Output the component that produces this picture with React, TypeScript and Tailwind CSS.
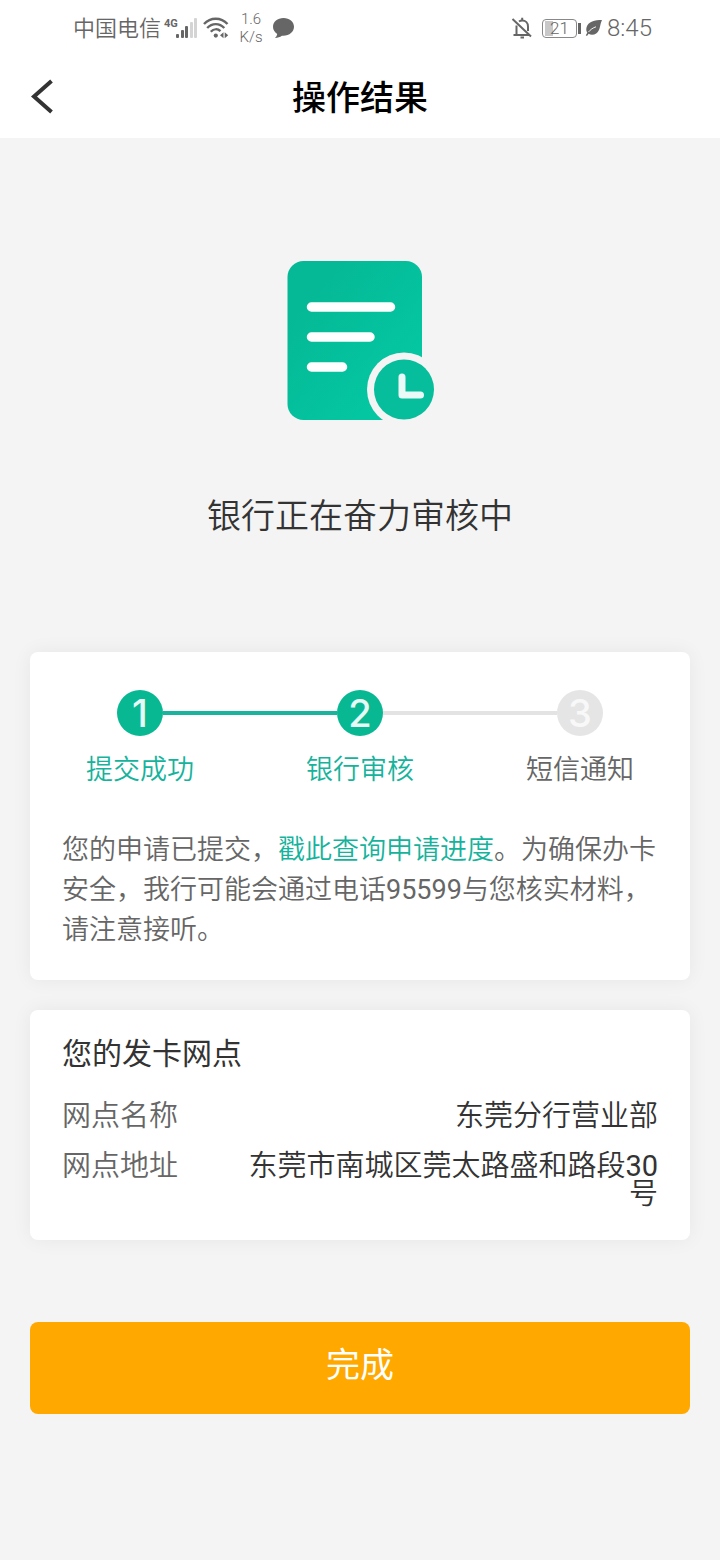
import clsx from "clsx";

const steps = [
  { id: 1, label: "提交成功", done: true },
  { id: 2, label: "银行审核", done: true },
  { id: 3, label: "短信通知", done: false },
];

function StatusBar() {
  return (
    <div className="flex h-14 items-center justify-between pr-[68px] pl-[73px] text-[#666]">
      <div className="flex items-center">
        <span className="text-[22px] font-[350]">中国电信</span>
        {/* Signal */}
        <svg className="ml-0.5 h-6 w-9" viewBox="0 0 36 24" fill="#666">
          <text x="1" y="11" fontSize="11" fontWeight="700" textAnchor="start">
            4G
          </text>
          <rect x="13" y="18" width="3" height="4" rx="1" />
          <rect x="18" y="14" width="3" height="8" rx="1" />
          <rect x="22" y="10" width="3" height="12" rx="1" />
          <rect x="27" y="6" width="3" height="16" rx="1" fill="#d4d4d4" />
          <rect x="31" y="2" width="3" height="20" rx="1" fill="#d4d4d4" />
        </svg>
        {/* Wifi */}
        <svg
          className="ml-1 h-6 w-7"
          viewBox="0 0 28 24"
          fill="none"
          stroke="#666"
          strokeWidth="2.4"
        >
          <path d="M1 8C7.500 1 18 1 24.500 8" />
          <path d="M4.200 12C9 6.800 16.500 6.800 21.300 12" />
          <path d="M7.800 15.800C10.800 12.600 14.700 12.600 17.500 15.200" />
          <circle cx="12.800" cy="19.600" r="2.100" fill="#666" stroke="none" />
          <path
            d="M20.500 16.300v6l-3.500-3zM21.700 16.300v6l3.500-3z"
            fill="#666"
            stroke="none"
          />
        </svg>
        <span className="ml-1.5 w-7 text-center text-[15px] leading-[18px] font-light">
          1.6
          <br />
          K/s
        </span>
        {/* Message bubble */}
        <svg className="ml-1.5 h-6 w-6" viewBox="0 0 24 24" fill="#666">
          <path d="M12.500 2C6.500 2 2 5.800 2 10.800c0 3 1.600 5.600 4.200 7.100-.2 1.500-1 2.900-2.200 4 2.800 0 5-.8 6.900-2.200 7 .6 12.100-3.600 12.100-8.900C23 5.800 18.500 2 12.500 2z" />
        </svg>
      </div>

      <div className="flex items-center">
        {/* Muted bell */}
        <svg
          className="h-6 w-6"
          viewBox="0 0 24 24"
          fill="none"
          stroke="#666"
          strokeWidth="2"
        >
          <path d="M6.500 9.500V18M3.500 19h15.500M9 5.500c1-.7 2-1 3.200-1 3.400 0 5.800 2.600 5.800 6v4.500" />
          <path d="M12.200 1.800v3M2.500 3l18.500 17.500" />
          <path d="M10.500 21.500h3.500" />
        </svg>
        {/* Battery */}
        <div className="ml-2 flex items-center">
          <span className="relative flex h-[19px] w-[35px] items-center justify-center rounded border border-[#888] text-[17px] leading-none font-light">
            <span className="absolute inset-y-px left-0.5 w-2 bg-[#c8c8c8]" />
            <span className="relative">21</span>
          </span>
          <span className="ml-px h-[11px] w-[3px] bg-[#666]" />
        </div>
        {/* Power saving leaf */}
        <svg className="ml-1 h-[18px] w-[18px]" viewBox="0 0 18 18" fill="#666">
          <path d="M17 1C10 1 3 2.500 1.500 8.500c-.6 2.400 0 4 .8 5.300L.8 16.200l1.200.8 1.600-2.200c2.200 1.400 5.200 1.300 7.600-.3C15.600 11.600 14.500 6 17 1z" />
          <path
            d="M3.500 13C5.500 10.500 8 8.800 11 7.800"
            fill="none"
            stroke="#fff"
            strokeWidth="0.900"
          />
        </svg>
        <span className="ml-1 text-2xl font-[350]">8:45</span>
      </div>
    </div>
  );
}

function ReviewIcon() {
  return (
    <svg className="h-[162px] w-[150px]" viewBox="0 0 150 162" fill="none">
      <defs>
        <linearGradient id="sheet" x1="0" y1="0" x2="1" y2="1">
          <stop offset="0.2" stopColor="#05b996" />
          <stop offset="0.800" stopColor="#04c7a2" />
        </linearGradient>
      </defs>
      <rect x="2.500" y="1" width="134.500" height="159" rx="16" fill="url(#sheet)" />
      <path
        d="M26.500 47h79M26.500 77h58.500M26.500 107h31"
        stroke="#fff"
        strokeWidth="9.500"
        strokeLinecap="round"
      />
      <circle cx="119" cy="129.500" r="37" fill="#f4f4f4" />
      <circle cx="119" cy="129.500" r="30" fill="#06be9b" />
      <path
        d="M117 117v18h18.500"
        stroke="#eafaf6"
        strokeWidth="7"
        strokeLinecap="round"
        strokeLinejoin="round"
      />
    </svg>
  );
}

function Steps() {
  return (
    <ol className="grid grid-cols-3">
      {steps.map((step, i) => (
        <li key={step.id} className="flex flex-col items-center">
          <div className="flex w-full items-center">
            <span
              className={clsx(
                "h-1 flex-1",
                i > 0 && (step.done ? "bg-[#1ab39d]" : "bg-[#e3e3e3]")
              )}
            />
            <span
              className={clsx(
                "flex size-[46px] items-center justify-center rounded-full font-[Inter] text-[38px] leading-none font-medium",
                step.done
                  ? "bg-[#08b893] text-[#e6f9f4]"
                  : "bg-[#e5e5e5] text-[#f8f8f8]"
              )}
            >
              {step.id}
            </span>
            <span
              className={clsx(
                "h-1 flex-1",
                i < steps.length - 1 &&
                  (steps[i + 1].done ? "bg-[#1ab39d]" : "bg-[#e3e3e3]")
              )}
            />
          </div>
          <span
            className={clsx(
              "mt-3.5 text-[27px] leading-10 font-[350]",
              step.done ? "text-[#16b39c]" : "text-[#666]"
            )}
          >
            {step.label}
          </span>
        </li>
      ))}
    </ol>
  );
}

export default function App() {
  return (
    <div className="min-h-screen bg-[#f4f4f4] font-[Roboto,'Noto_Sans_CJK_SC',sans-serif]">
      <header className="bg-white">
        <StatusBar />
        <div className="grid h-[82px] grid-cols-[60px_1fr_60px] items-center">
          <button type="button" aria-label="返回" className="flex justify-end pr-1.5">
            <svg className="h-9 w-6" viewBox="0 0 24 36" fill="none">
              <path d="M21.500 2L4 17.500l17.500 15.500" stroke="#333" strokeWidth="4" />
            </svg>
          </button>
          <h1 className="pt-0.5 text-center text-[34px] font-medium text-black">
            操作结果
          </h1>
        </div>
      </header>

      <main className="px-[30px] pb-10">
        <section className="flex flex-col items-center pt-[122px]">
          <ReviewIcon />
          <p className="mt-[70px] text-[34px] leading-[48px] font-[350] text-[#333]">
            银行正在奋力审核中
          </p>
        </section>

        <section className="mt-28 rounded-lg bg-white pt-[38px] pb-[30px] shadow-[0_0_20px_rgba(0,0,0,0.06)]">
          <Steps />
          <p className="mt-10 px-8 text-[27px] leading-10 font-[350] text-[#666]">
            您的申请已提交，
            <a href="#progress" className="text-[#16b39c]">
              戳此查询申请进度
            </a>
            。为确保办卡安全，我行可能会通过电话
            <span className="font-normal">95599</span>
            与您核实材料，请注意接听。
          </p>
        </section>

        <section className="mt-[30px] rounded-lg bg-white px-8 pt-6 pb-8 shadow-[0_0_20px_rgba(0,0,0,0.06)]">
          <h2 className="text-[30px] leading-10 text-[#333]">您的发卡网点</h2>
          <dl className="mt-7 space-y-[22px] text-[29px] leading-7 font-[350] text-[#333]">
            <div className="flex justify-between">
              <dt className="shrink-0 text-[#666]">网点名称</dt>
              <dd className="text-right">东莞分行营业部</dd>
            </div>
            <div className="flex justify-between">
              <dt className="shrink-0 text-[#666]">网点地址</dt>
              <dd className="max-w-[412px] text-right">
                东莞市南城区莞太路盛和路段<span className="font-normal">30</span>号
              </dd>
            </div>
          </dl>
        </section>

        <button
          type="button"
          className="mt-[82px] h-[92px] w-full rounded-lg bg-[#ffa800] pb-1.5 text-[34px] text-white"
        >
          完成
        </button>
      </main>
    </div>
  );
}
